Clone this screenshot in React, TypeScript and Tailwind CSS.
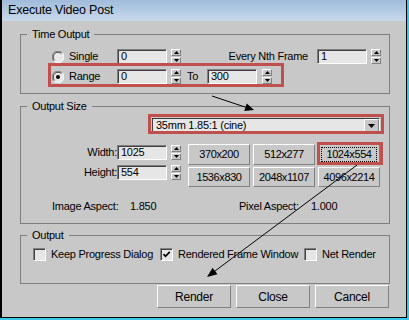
import React from 'react';

function Radio({ checked }: { checked?: boolean }) {
  return (
    <svg width="12" height="12" viewBox="0 0 12 12" className="shrink-0">
      <circle cx="6" cy="6" r="5.5" fill="#e8e8e8" />
      <path d="M1.8 10.2 A5.5 5.5 0 0 1 10.2 1.8" fill="none" stroke="#808080" strokeWidth="1" />
      <path d="M10.2 1.8 A5.5 5.5 0 0 1 1.8 10.2" fill="none" stroke="#ffffff" strokeWidth="1" />
      <path d="M2.6 9.4 A4.5 4.5 0 0 1 9.4 2.6" fill="none" stroke="#404040" strokeWidth="1" />
      {checked && <circle cx="6" cy="6" r="2" fill="#000" />}
    </svg>
  );
}

function Check({ checked }: { checked?: boolean }) {
  return (
    <div className="w-[13px] h-[13px] shrink-0 border border-t-[#808080] border-l-[#808080] border-b-white border-r-white shadow-[inset_1px_1px_0_#404040] bg-[#e6e6e6] flex items-center justify-center">
      {checked && (
        <svg width="9" height="9" viewBox="0 0 9 9">
          <path d="M1.5 4.2 L3.5 6.3 L7.8 1.8" fill="none" stroke="#000" strokeWidth="1.7" />
        </svg>
      )}
    </div>
  );
}

function Field({ value, w = 'w-[50px]' }: { value: string; w?: string }) {
  return (
    <div className={`${w} h-[15px] shrink-0 border border-t-[#808080] border-l-[#808080] border-b-white border-r-white shadow-[inset_1px_1px_0_#404040] bg-[#e6e6e6] pl-[3px] leading-[13px]`}>
      {value}
    </div>
  );
}

function Spinner({ className = '' }: { className?: string }) {
  const half = 'h-[7px] w-[10px] border border-t-white border-l-white border-b-[#808080] border-r-[#808080] bg-[#c8c8c8] flex items-center justify-center';
  return (
    <div className={`flex flex-col gap-[1px] shrink-0 ${className}`}>
      <div className={half}>
        <svg width="5" height="3" viewBox="0 0 5 3"><path d="M2.5 0 L5 3 L0 3 Z" fill="#000" /></svg>
      </div>
      <div className={half}>
        <svg width="5" height="3" viewBox="0 0 5 3"><path d="M0 0 L5 0 L2.5 3 Z" fill="#000" /></svg>
      </div>
    </div>
  );
}

function Btn({ label, focus }: { label: string; focus?: boolean }) {
  return (
    <div className="h-full border border-t-white border-l-white border-b-[#808080] border-r-[#808080] bg-[#c8c8c8] flex items-center justify-center p-[2px]">
      <div className={`w-full h-full flex items-center justify-center whitespace-nowrap ${focus ? 'border border-dotted border-black' : ''}`}>
        {label}
      </div>
    </div>
  );
}

function Group({ title, children, className = '' }: { title: string; children: React.ReactNode; className?: string }) {
  return (
    <fieldset className={`ml-[18px] w-[370px] border border-[#7f7f7f] p-0 ${className}`}>
      <legend className="ml-[6px] px-[5px] leading-[13px]">{title}</legend>
      {children}
    </fieldset>
  );
}

export default function App() {
  return (
    <div className="w-[409px] h-[320px] bg-[#3cc6ea] pr-[2px] pb-[2px] font-['Liberation_Sans',Arial,sans-serif] text-[11px] tracking-[-0.25px] text-black">
      <div className="relative w-[407px] h-[318px] border-l-2 border-r border-b border-black bg-[#c8c8c8] flex flex-col">
        <div className="h-[21px] shrink-0 bg-gradient-to-b from-[#a0bcdb] to-[#c8d9eb] pl-[6px] flex items-center text-[12.5px] tracking-[-0.2px]">
          Execute Video Post
        </div>

        <Group title="Time Output" className="mt-[7px]">
          <div className="pt-[8px] pb-[9px] pl-[31px] flex flex-col gap-[5px]">
            <div className="flex items-center h-[15px]">
              <div className="w-[65px] flex items-center gap-[5px]">
                <Radio />
                <span>Single</span>
              </div>
              <Field value="0" />
              <Spinner className="ml-[4px]" />
              <span className="w-[127px] text-right">Every Nth Frame</span>
              <div className="ml-[9px]"><Field value="1" /></div>
              <Spinner className="ml-[4px]" />
            </div>
            <div className="flex items-center h-[15px]">
              <div className="w-[65px] flex items-center gap-[5px]">
                <Radio checked />
                <span>Range</span>
              </div>
              <Field value="0" />
              <Spinner className="ml-[4px]" />
              <span className="ml-[6px] w-[20px]">To</span>
              <Field value="300" />
              <Spinner className="ml-[5px]" />
            </div>
          </div>
        </Group>

        <Group title="Output Size" className="mt-[6px]">
          <div className="pt-[5px] pb-[10px]">
            <div className="pl-[131px]">
              <div className="w-[228px] h-[15px] border border-t-[#404040] border-l-[#404040] border-b-white border-r-white bg-[#e6e6e6] flex items-center justify-between">
                <span className="pl-[3px] leading-[13px]">35mm 1.85:1 (cine)</span>
                <div className="w-[15px] h-[13px] border border-t-white border-l-white border-b-[#808080] border-r-[#808080] bg-[#c8c8c8] flex items-center justify-center">
                  <svg width="7" height="4" viewBox="0 0 7 4"><path d="M0 0 L7 0 L3.5 4 Z" fill="#000" /></svg>
                </div>
              </div>
            </div>
            <div className="mt-[11px] flex">
              <div className="flex flex-col gap-[5px] pt-[1px]">
                <div className="flex items-center h-[15px]">
                  <span className="w-[96px] text-right">Width:</span>
                  <Field value="1025" />
                  <Spinner className="ml-[4px]" />
                </div>
                <div className="flex items-center h-[15px]">
                  <span className="w-[96px] text-right">Height:</span>
                  <Field value="554" />
                  <Spinner className="ml-[4px]" />
                </div>
              </div>
              <div className="ml-[7px] grid grid-cols-[62px_62px_62px] grid-rows-[21px_20px] gap-x-[3px] gap-y-[2px] text-[11px] tracking-[-0.4px]">
                <Btn label="370x200" />
                <Btn label="512x277" />
                <Btn label="1024x554" focus />
                <Btn label="1536x830" />
                <Btn label="2048x1107" />
                <Btn label="4096x2214" />
              </div>
            </div>
            <div className="mt-[13px] pl-[31px] flex leading-[13px]">
              <span className="w-[78px]">Image Aspect:</span>
              <span className="w-[109px]">1.850</span>
              <span className="w-[72px]">Pixel Aspect:</span>
              <span>1.000</span>
            </div>
          </div>
        </Group>

        <Group title="Output" className="mt-[5px]">
          <div className="pt-[6px] pb-[22px] pl-[12px] flex items-center leading-[13px]">
            <div className="w-[127px] flex items-center gap-[5px]">
              <Check />
              <span>Keep Progress Dialog</span>
            </div>
            <div className="w-[144px] flex items-center gap-[5px]">
              <Check checked />
              <span>Rendered Frame Window</span>
            </div>
            <div className="flex items-center gap-[5px]">
              <Check />
              <span>Net Render</span>
            </div>
          </div>
        </Group>

        <div className="mt-[1px] ml-[155px] flex gap-[5px] h-[23px] text-[12px]">
          <div className="w-[74px]"><Btn label="Render" /></div>
          <div className="w-[74px]"><Btn label="Close" /></div>
          <div className="w-[74px]"><Btn label="Cancel" /></div>
        </div>

        {/* annotation highlights */}
        <div className="absolute left-[46px] top-[63px] w-[236px] h-[24px] border-[3px] border-[#c0504d]" />
        <div className="absolute left-[146px] top-[114px] w-[236px] h-[20px] border-[3px] border-[#c0504d]" />
        <div className="absolute left-[315px] top-[142px] w-[66px] h-[23px] border-[3px] border-[#c0504d]" />
        <svg className="absolute -left-[2px] top-0 pointer-events-none" width="409" height="320" viewBox="0 0 409 320">
          <line x1="212" y1="96" x2="245.5" y2="107.2" stroke="#000" strokeWidth="1" />
          <polygon points="254,110 244.2,111 246.8,103.4" fill="#000" />
          <line x1="357" y1="165" x2="215" y2="271" stroke="#000" strokeWidth="1" />
          <polygon points="207,277 212.6,267.8 217.4,274.2" fill="#000" />
        </svg>
      </div>
    </div>
  );
}
